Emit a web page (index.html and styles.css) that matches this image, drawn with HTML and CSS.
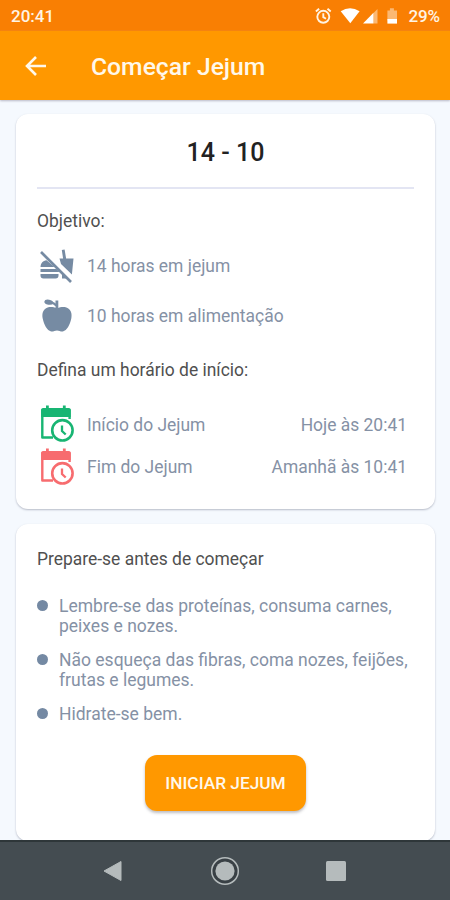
FILE: index.html
```
<!DOCTYPE html>
<html lang="pt-BR">
<head>
<meta charset="utf-8">
<title>Começar Jejum</title>
<link rel="stylesheet" href="styles.css">
</head>
<body>
<div class="app">
  <div class="status">
    <span class="clock">20:41</span>
    <svg class="status-icons" width="78" height="18" viewBox="0 0 78 18">
      <g fill="none" stroke="#fff3e3" stroke-width="1.9">
        <circle cx="8.3" cy="9.8" r="6"/>
        <path d="M8.3 6.3v3.8l2.7 1.6M.9 4.5l3.2-2.8M15.7 4.5l-3.2-2.8"/>
      </g>
      <path fill="#fff" d="M25.7 4.2Q35 -1.6 44.6 4.2L35.3 16.2z"/>
      <path fill="#fbb873" d="M62.5 2v14.5h-4V6z"/>
      <path fill="#fff" d="M58.5 5.8v10.7H48z"/>
      <path fill="#fbb873" d="M72.4 3.5h2.5V1.2h4v2.3H82v10h-9.6z"/>
      <path fill="#fff" d="M72.4 12H82v4.6h-9.6z"/>
    </svg>
    <span class="percent">29%</span>
  </div>
  <header class="toolbar">
    <svg class="back" width="22" height="20" viewBox="0 0 22 20" fill="none" stroke="#fff8ea" stroke-width="2.6"><path d="M21 10H2.5M11 1L2 10l9 9"/></svg>
    <h1>Começar Jejum</h1>
  </header>
  <main>
    <section class="card plan">
      <h2>14 - 10</h2>
      <h3 class="goal">Objetivo:</h3>
      <div class="row meal">
        <svg width="36" height="34" viewBox="0 0 36 34">
          <g fill="#768ba3">
            <path d="M.5 18C.7 14 3 11.500 6.500 11.200l8 6.800z"/>
            <path d="M.5 20h16l3 3H.5z"/>
            <path d="M.5 25h18v1.500q0 3-3 3H3.500q-3 0-3-3z"/>
            <path d="M19.500 9.500h3.600L21.800 1l2.800-.5 1.500 9h7.400l-1.600 16L21 15z"/>
            <path d="M22 24l5.500 5.500H22z"/>
          </g>
          <path d="M1 3L31 33" stroke="#768ba3" stroke-width="2.700"/>
        </svg>
        <span>14 horas em jejum</span>
      </div>
      <div class="row meal">
        <svg width="36" height="34" viewBox="0 0 36 34">
          <g fill="#768ba3">
            <path d="M17 9.200c3.500-.9 6.200-1.600 9.400-.6 4.600 1.400 5.900 6.400 4.900 11-1.300 6-4.300 12.200-8.400 12.800-2.400.3-3.500-1-5.900-1s-3.500 1.300-5.900 1C7 31.800 4 25.600 2.700 19.600c-1-4.600.3-9.600 4.900-11 3.200-1 5.900-.3 9.400.6z"/>
            <path d="M15.500 1.500h2.800v9h-2.800z"/>
            <ellipse cx="8.700" cy="3.200" rx="4.400" ry="2.500" transform="rotate(9 8.700 3.200)"/>
            <path d="M9 2.500h1c4 0 6.500 1.500 7 4.500h-2C14 5.200 12 4.800 9 4.500z"/>
          </g>
        </svg>
        <span>10 horas em alimentação</span>
      </div>
      <h3 class="define">Defina um horário de início:</h3>
      <div class="row time start">
        <svg width="36" height="38" viewBox="0 0 36 38"><use href="#calendar"/></svg>
        <span>Início do Jejum</span><span class="value">Hoje às 20:41</span>
      </div>
      <div class="row time end">
        <svg width="36" height="38" viewBox="0 0 36 38">
          <g id="calendar" fill="none" stroke="currentColor">
            <path d="M29.600 14V5H2.300v27.500H13" stroke-width="2.400" stroke-linejoin="round"/>
            <path d="M1.200 5q0-2 2-2h25.500q2 0 2 2v7H1.200z" fill="currentColor" stroke="none"/>
            <path d="M7.400.5v5M24.300.5v5" stroke-width="2.800"/>
            <circle cx="22.400" cy="25.300" r="10.200" stroke-width="2.600"/>
            <path d="M22 20.500v5.500l3.700 3.500" stroke-width="2.300"/>
          </g>
        </svg>
        <span>Fim do Jejum</span><span class="value">Amanhã às 10:41</span>
      </div>
    </section>
    <section class="card tips">
      <h3>Prepare-se antes de começar</h3>
      <ul>
        <li>Lembre-se das proteínas, consuma carnes,<br>peixes e nozes.</li>
        <li>Não esqueça das fibras, coma nozes, feijões,<br>frutas e legumes.</li>
        <li>Hidrate-se bem.</li>
      </ul>
      <button>INICIAR JEJUM</button>
    </section>
  </main>
  <nav>
    <svg width="20" height="22" viewBox="0 0 20 22"><path d="M18 1.500v19L1 11z" fill="#b5bbbc" stroke="#b5bbbc" stroke-linejoin="round"/></svg>
    <svg width="30" height="30" viewBox="0 0 30 30"><circle cx="15" cy="15" r="13.300" fill="#394045" stroke="#b5bbbc" stroke-width="1.500"/><circle cx="15" cy="15" r="9.600" fill="#b5bbbc"/></svg>
    <svg width="20" height="20" viewBox="0 0 20 20"><rect width="20" height="20" rx="1.500" fill="#b5bbbc"/></svg>
  </nav>
</div>
</body>
</html>
```
FILE: styles.css
```
* { box-sizing: border-box; margin: 0; padding: 0; }
body { font-family: Roboto, sans-serif; font-size: 17.5px; font-weight: 400; color: #8591a5; background: #f5f9fe; }
span, li { white-space: nowrap; }
svg { display: block; flex: none; overflow: visible; }
.app { height: 900px; display: flex; flex-direction: column; overflow: hidden; }
.status { height: 31px; flex: none; background: #f97f03; color: #fff4e5; display: flex; align-items: center; padding: 1px 10px 0 11px; font-size: 17px; font-weight: 500; }
.percent { letter-spacing: -.1px; }
.status-icons { margin: -1px 15px 0 auto; }
.toolbar { height: 69px; flex: none; background: #ff9800; color: #fff8ea; display: flex; align-items: center; gap: 44px; padding: 3px 25px 0; box-shadow: 0 1px 2px #b9b9c6; }
.toolbar .back { margin-top: -3px; }
h1 { font-size: 24.7px; font-weight: 500; line-height: 30px; }
main { flex: 1; min-height: 0; padding: 14px 15px 0 16px; display: flex; flex-direction: column; gap: 15px; }
.card { flex: none; background: #fff; border-radius: 12px; padding: 0 21px; box-shadow: 0 1px 2px rgba(70, 75, 100, .35); }
.plan { height: 395px; }
h2 { height: 75px; border-bottom: 2px solid #e3e5f3; text-align: center; color: #222; font-size: 25px; font-weight: 500; line-height: 78px; }
h3 { color: #505050; font-size: 17.45px; font-weight: 400; line-height: 24px; }
.goal { margin-top: 20px; }
.row { display: flex; align-items: center; font-size: 17.45px; }
.meal { height: 50px; padding-left: 3px; gap: 11px; }
.goal + .meal { margin-top: 8px; }
.define { margin-top: 17px; margin-bottom: 21px; }
.time { height: 43px; padding: 0 7px 0 3px; gap: 11px; }
.time svg { margin-top: -1px; }
.start svg { color: #18b573; }
.end { margin-top: -.5px; }
.end svg { color: #f76c6f; }
.value { margin-left: auto; }
.tips { height: 317px; padding-top: 23px; display: flex; flex-direction: column; }
ul { list-style: none; margin-top: 24.6px; display: flex; flex-direction: column; gap: 13.5px; }
li { position: relative; padding-left: 22px; line-height: 20.4px; }
li::before { content: ""; position: absolute; left: 0; top: 4px; width: 11px; height: 11px; border-radius: 50%; background: #7489a3; }
button { width: 161px; height: 56px; margin: 30.4px auto 0; border: 0; border-radius: 12px; background: #ff9800; color: #fff8ec; font: 500 17.3px Roboto, sans-serif; box-shadow: 0 2px 3px rgba(70, 70, 80, .35); }
nav { height: 60px; flex: none; z-index: 1; background: #444c51; border-top: 2px solid #2e3639; display: flex; align-items: center; justify-content: space-between; padding: 0 104px 0 103px; }
```
